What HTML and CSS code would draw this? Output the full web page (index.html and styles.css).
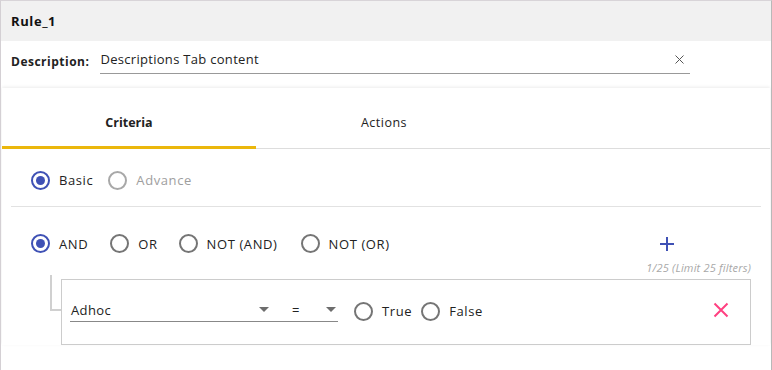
FILE: index.html
```html
<!DOCTYPE html>
<html>
<head>
<meta charset="utf-8">
<link rel="stylesheet" href="styles.css">
</head>
<body>
<div class="frame">
  <div class="header"><span class="title">Rule_1</span></div>
  <div class="desc-row">
    <span class="desc-label">Description:</span>
    <div class="desc-input">
      <span class="desc-value">Descriptions Tab content</span>
      <svg class="clear" width="9" height="9" viewBox="0 0 9 9"><path d="M0.5 0.5L8.5 8.5M8.5 0.5L0.5 8.5" stroke="#555" stroke-width="1"/></svg>
    </div>
  </div>
  <div class="card">
    <div class="tabs">
      <div class="tab active">Criteria</div>
      <div class="tab">Actions</div>
      <div class="tab-fill"></div>
    </div>
    <div class="mode-row">
      <label class="opt"><span class="radio checked"></span><span>Basic</span></label>
      <label class="opt disabled"><span class="radio grey"></span><span>Advance</span></label>
    </div>
    <div class="sep"></div>
    <div class="logic-row">
      <div class="logic-opts">
        <label class="opt"><span class="radio checked"></span><span>AND</span></label>
        <label class="opt"><span class="radio"></span><span>OR</span></label>
        <label class="opt"><span class="radio"></span><span>NOT (AND)</span></label>
        <label class="opt"><span class="radio"></span><span>NOT (OR)</span></label>
      </div>
      <svg class="plus" width="14" height="14" viewBox="0 0 14 14"><path d="M7 0V14M0 7H14" stroke="#3f51b5" stroke-width="2"/></svg>
    </div>
    <div class="count">1/25 (Limit 25 filters)</div>
    <div class="tree">
      <div class="branch"></div>
      <div class="filter">
        <div class="select field">
          <span>Adhoc</span>
          <span class="caret"></span>
        </div>
        <div class="select op">
          <span>=</span>
          <span class="caret"></span>
        </div>
        <label class="opt opt-true"><span class="radio"></span><span>True</span></label>
        <label class="opt"><span class="radio"></span><span>False</span></label>
        <svg class="remove" width="16" height="16" viewBox="0 0 16 16"><path d="M1.5 1.5L14.5 14.5M14.5 1.5L1.5 14.5" stroke="#ff4081" stroke-width="2"/></svg>
      </div>
    </div>
  </div>
</div>
</body>
</html>
```

FILE: styles.css
```css
* { box-sizing: border-box; }
body {
  margin: 0;
  font-family: "Open Sans", "Liberation Sans", sans-serif;
  color: #222;
  background: #fff;
}
.frame {
  width: 772px;
  height: 370px;
  border-left: 1px solid #d4d0d4;
  border-right: 1px solid #b8b8b8;
  border-top: 1px solid #d8d4d8;
  overflow: hidden;
}
.header {
  height: 40px;
  background: #f1f1f1;
  display: flex;
  align-items: center;
  padding-left: 10px;
}
.title {
  font-size: 13px;
  font-weight: 700;
  color: #111;
  letter-spacing: 0.6px;
}
.desc-row {
  height: 47px;
  display: flex;
  align-items: center;
  padding-left: 10px;
  padding-bottom: 6px;
}
.desc-label {
  font-size: 12px;
  font-weight: 700;
  color: #222;
  letter-spacing: 0.5px;
}
.desc-input {
  margin-left: 11px;
  width: 590px;
  display: flex;
  align-items: center;
  justify-content: space-between;
  border-bottom: 1px solid #999;
  padding: 0 6px 4px 0;
  font-size: 13px;
  letter-spacing: 0.3px;
  color: #222;
  height: 24px;
}
.clear { margin-top: 1px; }
.card {
  margin: 0 1px;
  box-shadow: 0 -1px 3px rgba(0,0,0,0.08);
}
.tabs {
  display: flex;
  height: 61px;
}
.tab {
  width: 256px;
  display: flex;
  align-items: center;
  justify-content: center;
  font-size: 12.5px;
  letter-spacing: 0.5px;
  color: #222;
  border-bottom: 1px solid #ddd;
  padding-top: 8px;
}
.tab.active {
  width: 254px;
  font-weight: 700;
  letter-spacing: 0;
  border-bottom: 3px solid #ebb70c;
  padding-top: 10px;
}
.tab-fill {
  flex: 1;
  border-bottom: 1px solid #ddd;
}
.opt {
  display: flex;
  align-items: center;
  font-size: 13px;
  letter-spacing: 0.6px;
  color: #222;
}
.opt.disabled { color: #9e9e9e; }
.radio {
  width: 19px;
  height: 19px;
  border-radius: 50%;
  border: 2px solid #757575;
  margin-right: 9px;
  display: flex;
  align-items: center;
  justify-content: center;
  flex: none;
}
.radio.grey { border-color: #a8a8a8; }
.radio.checked { border-color: #3f51b5; }
.radio.checked::after {
  content: "";
  width: 9px;
  height: 9px;
  border-radius: 50%;
  background: #3f51b5;
}
.mode-row {
  display: flex;
  align-items: center;
  height: 57px;
  padding-top: 5px;
  padding-left: 29px;
  gap: 15px;
}
.sep {
  margin: 0 9px 0 9px;
  border-top: 1px solid #e2e2e2;
}
.logic-row {
  display: flex;
  align-items: center;
  justify-content: space-between;
  height: 73px;
  padding: 0 96px 0 29px;
}
.logic-opts {
  display: flex;
  align-items: center;
}
.logic-opts .opt:nth-child(1) { margin-right: 22px; }
.logic-opts .opt:nth-child(2) { margin-right: 21px; }
.logic-opts .opt:nth-child(3) { margin-right: 23px; }
.count {
  text-align: right;
  padding-right: 19px;
  font-size: 11px;
  letter-spacing: 0.2px;
  font-style: italic;
  color: #a8a8a8;
  height: 12px;
  line-height: 12px;
  margin-top: -18px;
}
.tree {
  display: flex;
  padding-left: 48px;
  margin-top: 5px;
}
.branch {
  width: 11px;
  height: 36px;
  margin-top: -4px;
  border-left: 2px solid #d0d0d0;
  border-bottom: 2px solid #d0d0d0;
}
.filter {
  width: 690px;
  height: 66px;
  border: 1px solid #ccc;
  display: flex;
  align-items: center;
  padding-left: 8px;
}
.select {
  display: flex;
  align-items: center;
  justify-content: space-between;
  border-bottom: 1px solid #888;
  height: 24px;
  font-size: 13px;
  letter-spacing: 0.4px;
  color: #222;
  margin-top: -4px;
}
.select.field {
  width: 201px;
  padding-left: 1px;
  padding-right: 2px;
}
.select.op {
  width: 67px;
  padding-left: 21px;
  padding-right: 2px;
  margin-right: 16px;
}
.caret {
  width: 0;
  height: 0;
  border-left: 5px solid transparent;
  border-right: 5px solid transparent;
  border-top: 5px solid #6d6d6d;
}
.filter .opt { margin-top: -2px; }
.filter .opt-true { margin-right: 9px; }
.remove { margin-left: auto; margin-right: 21px; margin-top: -4px; }
```
